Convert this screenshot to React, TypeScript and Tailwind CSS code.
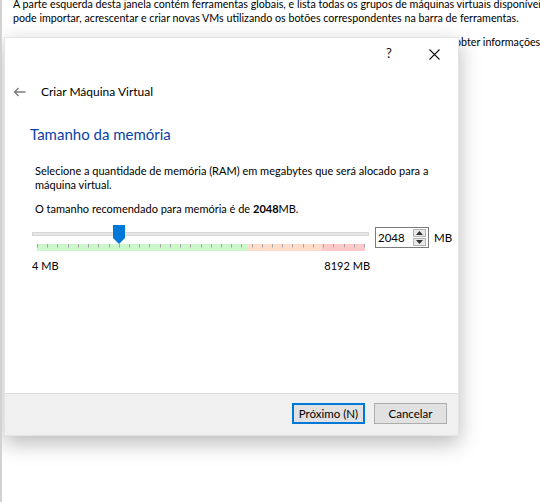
import React from "react"

const font = { fontFamily: 'Lato, "Noto Sans", sans-serif' }

function TickScale() {
  const ticks = Array.from({ length: 33 }, (_, i) => i)
  return (
    <svg width="328" height="7" className="block">
      <rect x="0" y="0" width="210" height="7" fill="#ccf7cc" />
      <rect x="210" y="0" width="75" height="7" fill="#ffdcca" />
      <rect x="285" y="0" width="43" height="7" fill="#ffc9c9" />
      {ticks.map((i) => {
        const x = Math.round((i * 327) / 32) + 0.5
        return <line key={i} x1={x} y1="0" x2={x} y2="3.5" stroke="#a4a4a4" strokeWidth="1" />
      })}
    </svg>
  )
}

function SpinBox() {
  return (
    <div className="flex h-[21px] w-[54px] items-center border border-[#7a7a7a] bg-white pl-[2px] pr-[2px]">
      <span className="flex-1 text-[11.5px] leading-none text-black">2048</span>
      <div className="flex h-[17px] w-[13px] flex-col gap-[1px]">
        <div className="flex flex-1 items-center justify-center border border-[#b4b4b4] bg-[#e8e8e8]">
          <svg width="7" height="4"><path d="M0 4 L3.5 0 L7 4 Z" fill="#333" /></svg>
        </div>
        <div className="flex flex-1 items-center justify-center border border-[#b4b4b4] bg-[#e8e8e8]">
          <svg width="7" height="4"><path d="M0 0 L3.5 4 L7 0 Z" fill="#333" /></svg>
        </div>
      </div>
    </div>
  )
}

export default function App() {
  return (
    <div className="relative h-[502px] w-[540px] overflow-hidden border-l-2 border-[#d2d2d2] bg-white text-[11px] text-black" style={font}>
      {/* Main window text behind dialog */}
      <div className="-mt-[3px] pl-[11px] text-[10.7px] leading-[13.5px] whitespace-nowrap">
        <p>A parte esquerda desta janela contém ferramentas globais, e lista todas os grupos de máquinas virtuais disponíveis. Você</p>
        <p>pode importar, acrescentar e criar novas VMs utilizando os botões correspondentes na barra de ferramentas.</p>
        <p className="mt-[11px] pl-[442px]">obter informações</p>
      </div>

      {/* Dialog */}
      <div className="absolute left-[2px] top-[37px] flex h-[399px] w-[455px] flex-col border border-[#e4e4e4] bg-white shadow-[0_7px_20px_rgba(0,0,0,0.28)]">
        {/* Title bar */}
        <div className="flex h-[32px] items-center justify-end">
          <span className="w-[20px] text-center text-[13px] text-[#111]">?</span>
          <span className="ml-[25px] mr-[14px] flex w-[20px] justify-center">
            <svg width="11" height="11" viewBox="0 0 11 11">
              <path d="M0.5 0.5 L10.5 10.5 M10.5 0.5 L0.5 10.5" stroke="#111" strokeWidth="1.1" />
            </svg>
          </span>
        </div>

        {/* Header */}
        <div className="mt-[12px] flex h-[20px] items-center">
          <span className="ml-[8px] flex w-[13px] justify-center">
            <svg width="13" height="10" viewBox="0 0 13 10">
              <path d="M12.5 5 H1.5 M5.5 1 L1.5 5 L5.5 9" stroke="#7c7c7c" strokeWidth="1.3" fill="none" />
            </svg>
          </span>
          <span className="ml-[15px] text-[12px]">Criar Máquina Virtual</span>
        </div>

        {/* Content */}
        <div className="flex-1 pl-[25px] whitespace-nowrap">
          <h2 className="mt-[22px] text-[15px] leading-[20px] text-[#0b3fa8]">Tamanho da memória</h2>
          <p className="mt-[20px] pl-[5px] leading-[14px]">
            Selecione a quantidade de memória (RAM) em megabytes que será alocado para a
            <br />
            máquina virtual.
          </p>
          <p className="mt-[10px] pl-[5px] leading-[14px]">
            O tamanho recomendado para memória é de <b>2048</b>MB.
          </p>

          <div className="mt-[9px] flex items-start">
            <div className="relative ml-[2px] w-[338px]">
              <div className="mt-[7px] h-[4px] w-[337px] border border-[#d6d6d6] bg-[#e7e7e7]" />
              <svg width="12" height="19" viewBox="0 0 12 19" className="absolute left-[81px] top-0">
                <path d="M0 0 H12 V13 L6 19 L0 13 Z" fill="#0078d7" />
              </svg>
              <div className="ml-[5px] mt-[8px]">
                <TickScale />
              </div>
              <div className="mt-[8px] flex justify-between leading-[14px]">
                <span>4 MB</span>
                <span>8192 MB</span>
              </div>
            </div>
            <div className="ml-[5px] mt-[2px] flex items-center">
              <SpinBox />
              <span className="ml-[5px] text-[11.5px]">MB</span>
            </div>
          </div>
        </div>

        {/* Footer */}
        <div className="flex h-[42px] items-start justify-end gap-[9px] border-t border-[#dcdcdc] bg-[#f0f0f0] pr-[11px] pt-[9px]">
          <button className="h-[21px] w-[73px] border-2 border-[#0078d7] bg-[#e1e1e1] text-[11.5px] leading-none">Próximo (N)</button>
          <button className="h-[21px] w-[73px] border border-[#adadad] bg-[#e1e1e1] text-[11.5px] leading-none">Cancelar</button>
        </div>
      </div>
    </div>
  )
}
